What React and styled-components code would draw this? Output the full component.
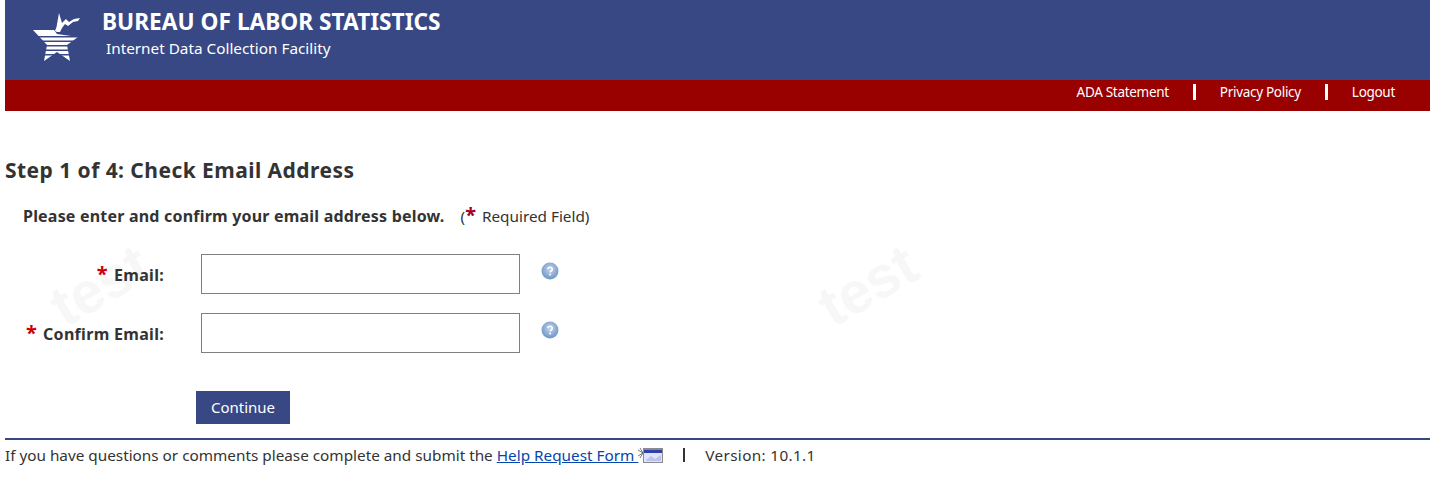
import React from "react";
import styled, { createGlobalStyle } from "styled-components";

const GlobalStyle = createGlobalStyle`
  html, body {
    margin: 0;
    padding: 0;
    background: #ffffff;
  }
  body {
    font-family: "Noto Sans", "Open Sans", sans-serif;
    font-size: 15.3px;
    color: #333333;
  }
`;

const Page = styled.div`
  position: relative;
  box-sizing: border-box;
  width: 1450px;
  height: 484px;
  padding: 0 20px 0 5px;
  overflow: hidden;
`;

const Watermark = styled.span`
  position: absolute;
  top: 250px;
  left: ${props => props.left}px;
  font-family: "Liberation Sans", sans-serif;
  font-weight: bold;
  font-size: 58px;
  line-height: 70px;
  color: #f7f7f7;
  transform: rotate(-30deg);
  z-index: 0;
`;

const Header = styled.header`
  display: flex;
  height: 80px;
  box-sizing: border-box;
  padding: 8px 0 0 19px;
  background: #384884;
`;

const LogoSvg = styled.svg`
  flex: none;
  margin-top: 2px;
`;

const Titles = styled.div`
  margin-left: 18px;
  color: #ffffff;
`;

const Title = styled.div`
  font-weight: bold;
  font-size: 22.7px;
  line-height: 28px;
`;

const Subtitle = styled.div`
  margin: 0 0 0 4px;
  font-size: 15.3px;
  line-height: 24px;
`;

const RedBar = styled.nav`
  display: flex;
  justify-content: flex-end;
  align-items: center;
  height: 31px;
  box-sizing: border-box;
  padding: 0 35px 7px 0;
  background: #990000;
`;

const NavLink = styled.a`
  font-size: 13.5px;
  color: #ffffff;
  letter-spacing: -0.3px;
`;

const NavDivider = styled.span`
  width: 3px;
  height: 16px;
  margin: 0 24px;
  background: #ffffff;
`;

const Main = styled.main`
  position: relative;
  z-index: 1;
`;

const Heading = styled.h1`
  margin: 45px 0 0;
  font-size: 21px;
  line-height: 28px;
  letter-spacing: 0.45px;
  font-weight: bold;
  color: #333333;
`;

const Intro = styled.p`
  display: flex;
  align-items: baseline;
  margin: 20px 0 0 18px;
  line-height: 24px;
`;

const IntroStrong = styled.strong`
  margin-right: 16px;
  font-size: 16px;
  letter-spacing: 0.2px;
`;

const Star = styled.span`
  color: ${props => (props.dark ? "#a50021" : "#cc0000")};
  font-weight: bold;
  font-size: 20px;
  line-height: 1;
`;

const RequiredNote = styled.span`
  margin-left: 6px;
`;

const Fields = styled.div`
  display: grid;
  grid-template-columns: 196px 340px 18px;
  grid-auto-rows: 40px;
  row-gap: 19px;
  margin-top: 26px;
  align-items: center;
`;

const FieldLabel = styled.label`
  display: flex;
  justify-content: flex-end;
  align-items: baseline;
  gap: 6px;
  padding: 2px 37px 0 0;
  font-size: 16px;
  font-weight: bold;
  letter-spacing: 0.3px;
`;

const TextInput = styled.input`
  box-sizing: border-box;
  width: 319px;
  height: 40px;
  border: 1px solid #808080;
  background: #ffffff;
  padding: 0 6px;
  outline: none;
`;

const HelpIcon = styled.svg`
  display: block;
  width: 18px;
  height: 18px;
  margin-bottom: 6px;
`;

const SubmitButton = styled.button`
  display: block;
  width: 94px;
  height: 33px;
  margin: 38px 0 0 191px;
  padding: 0 0 2px;
  border: 0;
  background: #384884;
  color: #ffffff;
  font-family: inherit;
  font-size: 15px;
`;

const Rule = styled.hr`
  height: 2px;
  margin: 14px 0 0;
  border: 0;
  background: #384884;
`;

const Footer = styled.footer`
  display: flex;
  align-items: center;
  height: 30px;
  white-space: nowrap;
`;

const HelpLink = styled.a`
  margin-left: 4px;
  color: #0645ad;
  text-decoration: underline;
  white-space: pre;
`;

const FooterDivider = styled.span`
  width: 2px;
  height: 14px;
  margin: 0 20px 0 19px;
  background: #333333;
`;

const Version = styled.span`
  letter-spacing: 0.35px;
`;

const Logo = () => (
  <LogoSvg width="60" height="56" viewBox="24 10 60 56" aria-hidden="true">
    <defs>
      <clipPath id="stripes">
        <rect x="30" y="28" width="52" height="8" />
        <rect x="30" y="37.5" width="52" height="3" />
        <rect x="30" y="42" width="52" height="3" />
        <rect x="30" y="46.5" width="52" height="3" />
        <rect x="30" y="51" width="52" height="3" />
        <rect x="30" y="55.5" width="52" height="7" />
      </clipPath>
    </defs>
    <path
      d="M55 31 L56.5 27 L59 13 L62 23 L66 19 L69 22 L74 19 L80 18 L78 21 L73 22 L68 26 L65 24 L62 28 L60 32 L57 32 Z"
      fill="#ffffff"
    />
    <path
      d="M33 30 L54 30 L57 34 L78 37 L67 45 L70 61 L57 52 L44 61 L47 45 Z"
      fill="#ffffff"
      clipPath="url(#stripes)"
    />
  </LogoSvg>
);

const QuestionIcon = () => (
  <HelpIcon viewBox="0 0 18 18" aria-hidden="true">
    <defs>
      <radialGradient id="help" cx="50%" cy="40%" r="60%">
        <stop offset="0%" stopColor="#c4d6ec" />
        <stop offset="100%" stopColor="#6d93c4" />
      </radialGradient>
    </defs>
    <circle cx="9" cy="9" r="8.5" fill="url(#help)" />
    <path
      d="M6.6 7.2 C6.8 5.8 8 5.2 9.2 5.3 C10.6 5.4 11.5 6.3 11.3 7.6 C11.1 8.8 9.4 9 9.2 10.4"
      fill="none"
      stroke="#ffffff"
      strokeWidth="1.6"
    />
    <circle cx="9.1" cy="12.6" r="1" fill="#ffffff" />
  </HelpIcon>
);

const WindowIcon = () => (
  <svg width="26" height="16" viewBox="0 0 26 16" aria-hidden="true">
    <path d="M0 3 L5 6 L0 9 M2 1 L5 6 L2 11" fill="none" stroke="#555555" strokeWidth="0.8" />
    <rect x="5" y="1" width="20" height="15" fill="#8a8a8a" />
    <rect x="6" y="3" width="18" height="3" fill="#2f3fb0" />
    <rect x="6" y="6" width="18" height="9" fill="#dfe4fb" />
    <path d="M8 13 L13 9 L17 12 L23 8 L23 14 L8 14 Z" fill="#b9c3ee" />
  </svg>
);

export default function App() {
  return (
    <Page>
      <GlobalStyle />
      <Watermark left={48}>test</Watermark>
      <Watermark left={816}>test</Watermark>
      <Header>
        <Logo />
        <Titles>
          <Title>BUREAU OF LABOR STATISTICS</Title>
          <Subtitle>Internet Data Collection Facility</Subtitle>
        </Titles>
      </Header>
      <RedBar>
        <NavLink>ADA Statement</NavLink>
        <NavDivider />
        <NavLink>Privacy Policy</NavLink>
        <NavDivider />
        <NavLink>Logout</NavLink>
      </RedBar>
      <Main>
        <Heading>Step 1 of 4: Check Email Address</Heading>
        <Intro>
          <IntroStrong>Please enter and confirm your email address below.</IntroStrong>
          (<Star dark>*</Star>
          <RequiredNote>Required Field)</RequiredNote>
        </Intro>
        <Fields>
          <FieldLabel>
            <Star>*</Star>Email:
          </FieldLabel>
          <TextInput type="text" />
          <QuestionIcon />
          <FieldLabel>
            <Star>*</Star>Confirm Email:
          </FieldLabel>
          <TextInput type="text" />
          <QuestionIcon />
        </Fields>
        <SubmitButton>Continue</SubmitButton>
        <Rule />
        <Footer>
          If you have questions or comments please complete and submit the
          <HelpLink>Help Request Form </HelpLink>
          <WindowIcon />
          <FooterDivider />
          <Version>Version: 10.1.1</Version>
        </Footer>
      </Main>
    </Page>
  );
}
